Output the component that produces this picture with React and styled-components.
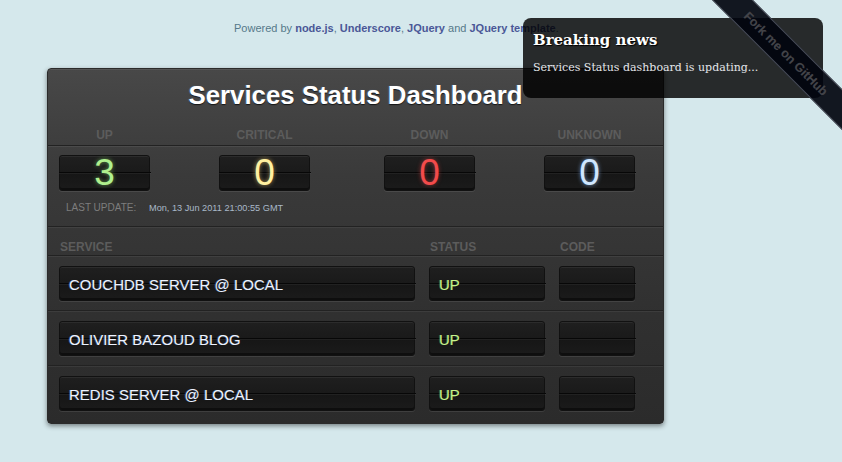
import React from "react";
import styled, { createGlobalStyle } from "styled-components";

const Global = createGlobalStyle`
  html, body { margin: 0; padding: 0; }
  body {
    background: #d5e8ec;
    font-family: "Liberation Sans", Arial, sans-serif;
    width: 842px;
    height: 462px;
    overflow: hidden;
    position: relative;
  }
`;

const Page = styled.div`
  padding: 21px 0 0 47px;
`;

const Powered = styled.div`
  font-size: 11px;
  line-height: 14px;
  color: #55798a;
  padding-left: 187px;
  a {
    color: #4a5797;
    font-weight: bold;
    text-decoration: none;
  }
`;

const Panel = styled.div`
  margin-top: 33px;
  width: 615px;
  border: 1px solid #2b2b2b;
  border-radius: 4px;
  background: linear-gradient(#484848 0%, #3a3a3a 30%, #303030 70%, #2b2b2b 100%);
  box-shadow: 0 2px 5px rgba(0, 0, 0, 0.45), inset 0 1px 0 rgba(255, 255, 255, 0.08);
`;

const Title = styled.h1`
  margin: 0;
  padding-top: 10px;
  font-size: 25.8px;
  line-height: 32px;
  font-weight: bold;
  color: #fff;
  text-align: center;
  text-shadow: 0 1px 1px rgba(0, 0, 0, 0.7), -1px 0 1px rgba(120, 170, 255, 0.4);
`;

const StatGrid = styled.div`
  display: grid;
  grid-template-columns: 160px 165px 160px 91px;
  padding: 0 11px;
`;

const LabelRow = styled(StatGrid)`
  padding-top: 17px;
  padding-bottom: 3px;
  border-bottom: 1px solid #222;
  box-shadow: 0 1px 0 rgba(255, 255, 255, 0.07);
`;

const Label = styled.div`
  width: 91px;
  font-size: 12px;
  line-height: 14px;
  font-weight: bold;
  color: #5c5c5c;
  white-space: nowrap;
  display: flex;
  justify-content: center;
`;

const CounterRow = styled(StatGrid)`
  padding-top: 9px;
`;

const Flap = styled.div`
  position: relative;
  box-sizing: border-box;
  height: ${(p) => p.$h || "36px"};
  width: ${(p) => p.$w || "91px"};
  border: 1px solid #111;
  border-radius: 3px;
  background: linear-gradient(#1f1f1f 0%, #1a1a1a 48%, #161616 52%, #1b1b1b 100%);
  box-shadow: 0 1px 0 rgba(255, 255, 255, 0.09), inset 0 1px 0 rgba(255, 255, 255, 0.06),
    inset 0 -2px 0 rgba(0, 0, 0, 0.45);
  display: flex;
  align-items: center;
  justify-content: ${(p) => (p.$left ? "flex-start" : "center")};
  padding-left: ${(p) => (p.$left ? "9px" : "0")};
  &::after {
    content: "";
    position: absolute;
    left: -1px;
    right: -2px;
    top: 16px;
    height: 1px;
    background: #070707;
    box-shadow: 0 1px 0 rgba(255, 255, 255, 0.05);
  }
`;

const Digit = styled.span`
  font-size: 37px;
  line-height: 36px;
  font-weight: normal;
  color: ${(p) => p.$c};
  text-shadow: 0 0 4px ${(p) => p.$g};
  position: relative;
  z-index: 1;
`;

const UpdateLine = styled.div`
  padding: 11px 0 12px 18px;
  display: flex;
  align-items: center;
  line-height: 12px;
`;

const UpdateLabel = styled.span`
  font-size: 10px;
  color: #7d7d7d;
  width: 83px;
`;

const UpdateValue = styled.span`
  font-size: 9.2px;
  color: #a9b9c9;
`;

const TableGrid = styled.div`
  display: grid;
  grid-template-columns: 356px 116px 76px;
  column-gap: 14px;
  padding: 0 11px;
`;

const TableHead = styled(TableGrid)`
  padding-top: 13px;
  padding-bottom: 1px;
  border-top: 1px solid #222;
  border-bottom: 1px solid #222;
  box-shadow: inset 0 1px 0 rgba(255, 255, 255, 0.06), 0 1px 0 rgba(255, 255, 255, 0.06);
`;

const HeadCell = styled.div`
  font-size: 12px;
  line-height: 14px;
  font-weight: bold;
  color: #5c5c5c;
  padding-left: 1px;
`;

const Row = styled(TableGrid)`
  padding-top: 10px;
  padding-bottom: ${(p) => (p.$last ? "12px" : "9px")};
  border-bottom: ${(p) => (p.$last ? "none" : "1px solid #222")};
  box-shadow: ${(p) => (p.$last ? "none" : "0 1px 0 rgba(255,255,255,0.06)")};
`;

const CellText = styled.span`
  font-size: 15px;
  line-height: 18px;
  color: ${(p) => p.$c || "#eef3ff"};
  text-shadow: -1px 0 0 ${(p) => p.$g || "rgba(120,170,255,0.35)"};
  position: relative;
  top: 1px;
  z-index: 1;
`;

const News = styled.div`
  position: absolute;
  top: 18px;
  right: 19px;
  width: 300px;
  height: 80px;
  box-sizing: border-box;
  padding: 13px 10px;
  border-radius: 8px;
  background: rgba(0, 0, 0, 0.82);
  font-family: "DejaVu Serif", "Liberation Serif", serif;
  z-index: 2;
`;

const NewsTitle = styled.div`
  font-size: 15px;
  line-height: 18px;
  font-weight: bold;
  color: #fff;
  text-shadow: 1px 1px 1px #000;
`;

const NewsText = styled.div`
  margin-top: 12px;
  font-size: 11px;
  line-height: 14px;
  color: #e4e6ea;
`;

const RibbonWrap = styled.div`
  position: absolute;
  top: 0;
  right: 0;
  width: 160px;
  height: 160px;
  overflow: hidden;
  z-index: 3;
`;

const Ribbon = styled.a`
  position: absolute;
  left: -11px;
  top: 39px;
  width: 230px;
  height: 29px;
  box-sizing: border-box;
  transform: rotate(45deg);
  background: rgba(1, 4, 14, 0.92);
  border-top: 1px solid rgba(90, 95, 108, 0.8);
  border-bottom: 1px solid rgba(90, 95, 108, 0.8);
  display: flex;
  align-items: center;
  justify-content: center;
  font-family: "Liberation Sans", Arial, sans-serif;
  font-size: 12.5px;
  font-weight: bold;
  color: #434449;
  text-decoration: none;
  text-shadow: 0 0 1px rgba(255, 255, 255, 0.08);
`;

const stats = [
  { label: "UP", value: "3", c: "#b0f08e", g: "rgba(140,230,110,0.6)" },
  { label: "CRITICAL", value: "0", c: "#fff0a0", g: "rgba(255,220,120,0.6)" },
  { label: "DOWN", value: "0", c: "#f24b4b", g: "rgba(255,70,70,0.5)" },
  { label: "UNKNOWN", value: "0", c: "#cfe6ff", g: "rgba(140,190,255,0.7)" },
];

const services = ["COUCHDB SERVER @ LOCAL", "OLIVIER BAZOUD BLOG", "REDIS SERVER @ LOCAL"];

export default function App() {
  return (
    <>
      <Global />
      <News>
        <NewsTitle>Breaking news</NewsTitle>
        <NewsText>Services Status dashboard is updating...</NewsText>
      </News>
      <RibbonWrap>
        <Ribbon href="#">Fork me on GitHub</Ribbon>
      </RibbonWrap>
      <Page>
        <Powered>
          Powered by <a href="#">node.js</a>, <a href="#">Underscore</a>, <a href="#">JQuery</a> and{" "}
          <a href="#">JQuery template</a>.
        </Powered>
        <Panel>
          <Title>Services Status Dashboard</Title>
          <LabelRow>
            {stats.map((s) => (
              <Label key={s.label}>{s.label}</Label>
            ))}
          </LabelRow>
          <CounterRow>
            {stats.map((s) => (
              <Flap key={s.label}>
                <Digit $c={s.c} $g={s.g}>
                  {s.value}
                </Digit>
              </Flap>
            ))}
          </CounterRow>
          <UpdateLine>
            <UpdateLabel>LAST UPDATE:</UpdateLabel>
            <UpdateValue>Mon, 13 Jun 2011 21:00:55 GMT</UpdateValue>
          </UpdateLine>
          <TableHead>
            <HeadCell>SERVICE</HeadCell>
            <HeadCell>STATUS</HeadCell>
            <HeadCell>CODE</HeadCell>
          </TableHead>
          {services.map((name, i) => (
            <Row key={name} $last={i === services.length - 1}>
              <Flap $w="356px" $h="35px" $left>
                <CellText>{name}</CellText>
              </Flap>
              <Flap $w="116px" $h="35px" $left>
                <CellText $c="#c8f38c" $g="rgba(150,230,110,0.35)">
                  UP
                </CellText>
              </Flap>
              <Flap $w="76px" $h="35px" />
            </Row>
          ))}
        </Panel>
      </Page>
    </>
  );
}
